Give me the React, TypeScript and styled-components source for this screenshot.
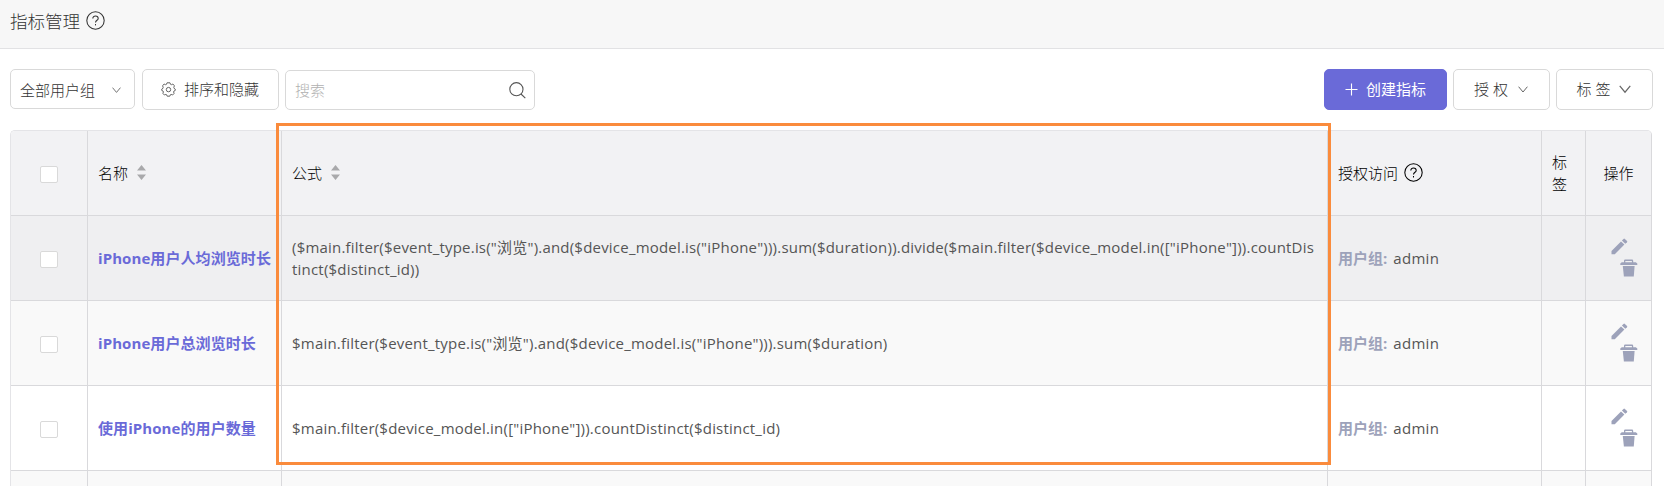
import React from "react";
import styled, { createGlobalStyle } from "styled-components";

const GlobalStyle = createGlobalStyle`
  * { box-sizing: border-box; }
  html, body { margin: 0; height: 486px; overflow: hidden; background: #fff; }
  body {
    font-family: "Open Sans", "Noto Sans CJK SC", sans-serif;
    font-size: 15px;
    line-height: 22.5px;
    color: #555;
  }
`;

const Page = styled.div`
  height: 486px;
  overflow: hidden;
  display: flex;
  flex-direction: column;
`;

const Header = styled.header`
  flex: none;
  display: flex;
  align-items: center;
  height: 49px;
  padding: 0 0 6px 10px;
  gap: 6px;
  background: #f7f7f7;
  border-bottom: 1px solid #e2e2e4;
  font-size: 17.5px;
  font-weight: 300;
  color: #333;
`;

const Toolbar = styled.div`
  flex: none;
  display: flex;
  align-items: flex-start;
  padding: 20px 11px 0 10px;
  height: 81px;
  font-weight: 300;
  color: #333;
`;

const Spacer = styled.div`
  flex: 1;
`;

const Button = styled.button<{ $width: number; $gap: number; $primary?: boolean; $ml?: number }>`
  display: flex;
  align-items: center;
  justify-content: center;
  width: ${(p) => p.$width}px;
  height: 41px;
  margin: 0 0 0 ${(p) => p.$ml ?? 6}px;
  padding: 0 ${(p) => (p.$primary ? 0 : 1)}px 0 0;
  gap: ${(p) => p.$gap}px;
  border: 1px solid ${(p) => (p.$primary ? "#6a6ad8" : "#d9d9d9")};
  border-radius: 5px;
  background: ${(p) => (p.$primary ? "#6a6ad8" : "#fff")};
  color: ${(p) => (p.$primary ? "#fff" : "#333")};
  font: inherit;
  font-weight: ${(p) => (p.$primary ? 400 : 300)};
  white-space: nowrap;
`;

const Select = styled.div`
  display: flex;
  align-items: center;
  justify-content: space-between;
  width: 125px;
  height: 40px;
  padding: 2px 13px 0 9px;
  border: 1px solid #d9d9d9;
  border-radius: 5px;
`;

const Search = styled.div`
  display: flex;
  align-items: center;
  justify-content: space-between;
  width: 250px;
  height: 40px;
  margin: 1px 0 0 6px;
  padding: 0 8px 0 9px;
  border: 1px solid #d9d9d9;
  border-radius: 5px;
  color: #b0b0b0;
`;

const TableWrap = styled.div`
  position: relative;
  flex: none;
  width: 1642px;
  margin-left: 10px;
`;

const Table = styled.div`
  border: 1px solid #e4e4e7;
  border-right-color: #d9d9dc;
  border-radius: 5px 5px 0 0;
  overflow: hidden;
`;

const Row = styled.div<{ $bg: string }>`
  display: grid;
  grid-template-columns: 77px 194px 1046px 214px 44px 65px;
  height: 85px;
  background: ${(p) => p.$bg};
`;

const Cell = styled.div<{ $center?: boolean }>`
  display: flex;
  align-items: center;
  justify-content: ${(p) => (p.$center ? "center" : "flex-start")};
  padding: 0 ${(p) => (p.$center ? 0 : 10)}px;
  border-right: 1px solid #d9d9dc;
  border-bottom: 1px solid #d9d9dc;
  white-space: nowrap;

  &:last-child {
    border-right: 0;
  }
`;

const HeadCell = styled(Cell)<{ $gap?: number }>`
  color: #000;
  font-weight: 300;
  gap: ${(p) => p.$gap ?? 8}px;
`;

const TagHead = styled.span`
  width: 15px;
  white-space: normal;
`;

const Checkbox = styled.span`
  width: 18px;
  height: 17px;
  margin: 2px 1px 0 0;
  border: 1px solid #d9d9d9;
  border-radius: 2px;
  background: #fff;
`;

const Name = styled.a`
  color: #6a6ad8;
  font-weight: 700;
  letter-spacing: 0.08px;
`;

const Formula = styled.div`
  color: #555;
  letter-spacing: 0.206px;
`;

const GroupLabel = styled.span`
  margin-right: 6px;
  color: #9da2ba;
  font-weight: 700;
`;

const UserName = styled.span`
  letter-spacing: 0.3px;
`;

const ActionCell = styled(Cell)`
  flex-direction: column;
  justify-content: center;
  align-items: flex-end;
  padding: 0 13px 1px 0;
  gap: 4px;

  svg:first-child {
    margin-right: 10px;
  }
`;

const Highlight = styled.div`
  position: absolute;
  left: 266px;
  top: -7px;
  width: 1055px;
  height: 342px;
  border: 3px solid #fa8b3c;
`;

const HelpSvg = styled.svg`
  margin-bottom: 2px;
`;

const HelpIcon = () => (
  <HelpSvg width="19" height="19" viewBox="0 0 19 19" fill="none" stroke="currentColor" strokeWidth="1.05">
    <circle cx="9.5" cy="9.5" r="8.7" />
    <path d="M6.8 7.5 C6.8 5.8 8 5 9.5 5 C11 5 12.2 5.9 12.2 7.4 C12.2 9.3 9.5 9.2 9.5 11.6" />
    <path d="M9.5 13 V14.4" />
  </HelpSvg>
);

const SearchIcon = () => (
  <svg width="17" height="17" viewBox="0 0 17 17" fill="none" stroke="#555" strokeWidth="1.1">
    <circle cx="7.4" cy="7.2" r="6.6" />
    <path d="M12 12 L16.3 16.1" />
  </svg>
);

const ChevronIcon = ({ width }: { width: number }) => (
  <svg width={width} height={width * 0.7} viewBox="0 0 10 7" fill="none" stroke="#666" strokeWidth="1">
    <path d="M0.6 0.7 L5 6 L9.4 0.7" />
  </svg>
);

const PlusIcon = () => (
  <svg width="13" height="13" viewBox="0 0 13 13" stroke="currentColor" strokeWidth="1.1">
    <path d="M6.5 0.5 V12.5 M0.5 6.5 H12.5" />
  </svg>
);

const GearIcon = () => (
  <svg width="15" height="15" viewBox="0 0 15 15" fill="none" stroke="#666" strokeWidth="1" strokeLinejoin="round">
    <path d="M6 0.8 H9 L9.5 2.3 L10.4 2.7 L11.9 2 L13.4 3.8 L12.8 5.4 L13 6.3 L14.3 7.2 V8.4 L12.9 9.1 L12.6 10 L13.1 11.4 L11.6 13 L10.1 12.4 L9.3 12.8 L8.8 14.2 H6.2 L5.7 12.8 L4.9 12.4 L3.4 13 L1.9 11.4 L2.4 10 L2.1 9.1 L0.7 8.4 V7.2 L2 6.3 L2.2 5.4 L1.6 3.8 L3.1 2 L4.6 2.7 L5.5 2.3 Z" />
    <circle cx="7.5" cy="7.6" r="2.2" />
  </svg>
);

const SortSvg = styled.svg`
  margin: 0 0 1px 1px;
`;

const SortIcon = () => (
  <SortSvg width="9" height="15" viewBox="0 0 9 15" fill="#a9a9ab">
    <path d="M4.5 0 L9 5.5 H0 Z M0 9.5 H9 L4.5 15 Z" />
  </SortSvg>
);

const PencilIcon = () => (
  <svg width="17" height="17" viewBox="0 0 17 17" fill="#9da2ba">
    <path d="M0.5 13 L10 3.4 L13.4 6.6 L3.8 16.2 H0.5 Z" />
    <path d="M10.9 2.6 L12.5 0.9 Q13.2 0.3 13.9 0.9 L16 2.9 Q16.6 3.6 16 4.2 L14.3 5.8 Z" />
  </svg>
);

const TrashIcon = () => (
  <svg width="18" height="18" viewBox="0 0 18 18" fill="#9da2ba">
    <path
      d="M4 3.3 V1.8 Q4 0.6 5.2 0.6 H12 Q13.2 0.6 13.2 1.8 V3.3 H15.8 L17.3 4.6 V6 H0.3 V4.6 L1.8 3.3 Z M5.3 3.3 H11.9 V1.9 H5.3 Z"
      fillRule="evenodd"
    />
    <path d="M2.8 7 H14.6 L13.8 17.6 H3.9 Z" />
  </svg>
);

const rows = [
  {
    name: "iPhone用户人均浏览时长",
    formula: [
      '($main.filter($event_type.is("浏览").and($device_model.is("iPhone"))).sum($duration)).divide($main.filter($device_model.in(["iPhone"])).countDis',
      "tinct($distinct_id))",
    ],
    bg: "#efeff1",
  },
  {
    name: "iPhone用户总浏览时长",
    formula: ['$main.filter($event_type.is("浏览").and($device_model.is("iPhone"))).sum($duration)'],
    bg: "#f9f9f9",
  },
  {
    name: "使用iPhone的用户数量",
    formula: ['$main.filter($device_model.in(["iPhone"])).countDistinct($distinct_id)'],
    bg: "#fff",
  },
];

export default function App() {
  return (
    <Page>
      <GlobalStyle />
      <Header>
        指标管理
        <HelpIcon />
      </Header>
      <Toolbar>
        <Select>
          全部用户组
          <ChevronIcon width={9} />
        </Select>
        <Button $width={137} $gap={8} $ml={7}>
          <GearIcon />
          排序和隐藏
        </Button>
        <Search>
          搜索
          <SearchIcon />
        </Search>
        <Spacer />
        <Button $width={123} $gap={8} $primary>
          <PlusIcon />
          创建指标
        </Button>
        <Button $width={97} $gap={10}>
          授 权
          <ChevronIcon width={10} />
        </Button>
        <Button $width={97} $gap={9}>
          标 签
          <ChevronIcon width={12} />
        </Button>
      </Toolbar>
      <TableWrap>
        <Table>
          <Row $bg="#f2f2f4">
            <HeadCell $center>
              <Checkbox />
            </HeadCell>
            <HeadCell>
              名称
              <SortIcon />
            </HeadCell>
            <HeadCell>
              公式
              <SortIcon />
            </HeadCell>
            <HeadCell $gap={6}>
              授权访问
              <HelpIcon />
            </HeadCell>
            <HeadCell>
              <TagHead>标签</TagHead>
            </HeadCell>
            <HeadCell $center>操作</HeadCell>
          </Row>
          {rows.map((row) => (
            <Row key={row.name} $bg={row.bg}>
              <Cell $center>
                <Checkbox />
              </Cell>
              <Cell>
                <Name>{row.name}</Name>
              </Cell>
              <Cell>
                <Formula>
                  {row.formula.map((line) => (
                    <div key={line}>{line}</div>
                  ))}
                </Formula>
              </Cell>
              <Cell>
                <GroupLabel>用户组:</GroupLabel>
                <UserName>admin</UserName>
              </Cell>
              <Cell />
              <ActionCell>
                <PencilIcon />
                <TrashIcon />
              </ActionCell>
            </Row>
          ))}
          <Row $bg="#f9f9f9">
            <Cell />
            <Cell />
            <Cell />
            <Cell />
            <Cell />
            <Cell />
          </Row>
        </Table>
        <Highlight />
      </TableWrap>
    </Page>
  );
}
